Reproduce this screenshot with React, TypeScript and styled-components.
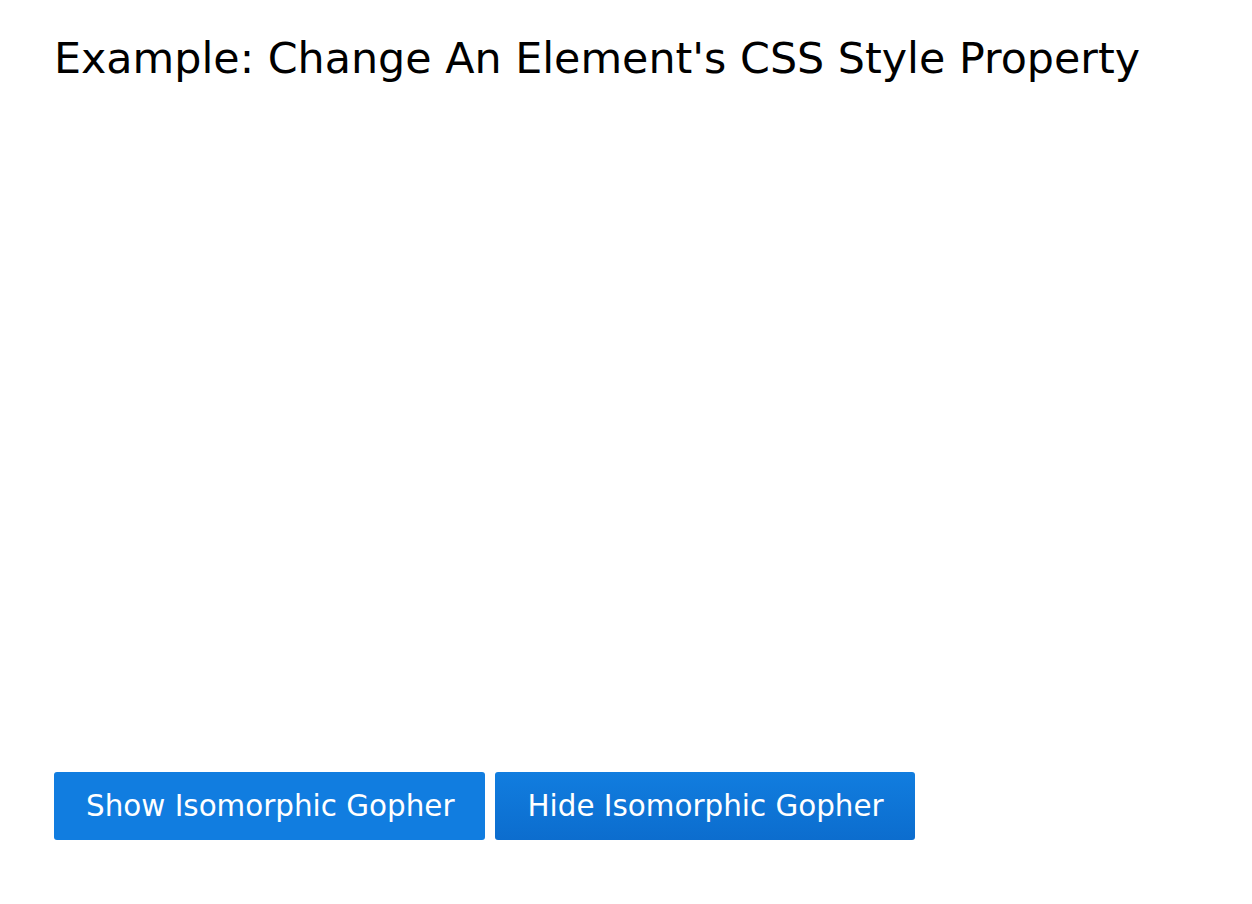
import React from 'react';
import styled, { createGlobalStyle } from 'styled-components';

const GlobalStyle = createGlobalStyle`
  html, body {
    margin: 0;
    padding: 0;
    background: #ffffff;
  }
`;

const Page = styled.div`
  padding: 28px 54px 0;
  font-family: 'DejaVu Sans', Verdana, sans-serif;
  color: #000;
`;

const Title = styled.h1`
  margin: 0;
  font-size: 42.8px;
  font-weight: normal;
  line-height: 60px;
`;

const GopherArea = styled.div`
  height: 684px;
`;

const ButtonRow = styled.div`
  display: flex;
  gap: 10px;
`;

const Button = styled.button<{ $active?: boolean }>`
  height: 68px;
  padding: 0 31px 0 32px;
  border: none;
  border-radius: 3px;
  color: #fff;
  font-family: 'DejaVu Sans', Verdana, sans-serif;
  font-size: 29.4px;
  cursor: pointer;
  background: ${(p) =>
    p.$active ? 'linear-gradient(#117ddf, #0c6dce)' : '#117de0'};
`;

const App: React.FC = () => {
  return (
    <Page>
      <GlobalStyle />
      <Title>Example: Change An Element's CSS Style Property</Title>
      <GopherArea />
      <ButtonRow>
        <Button>Show Isomorphic Gopher</Button>
        <Button $active>Hide Isomorphic Gopher</Button>
      </ButtonRow>
    </Page>
  );
};

export default App;
